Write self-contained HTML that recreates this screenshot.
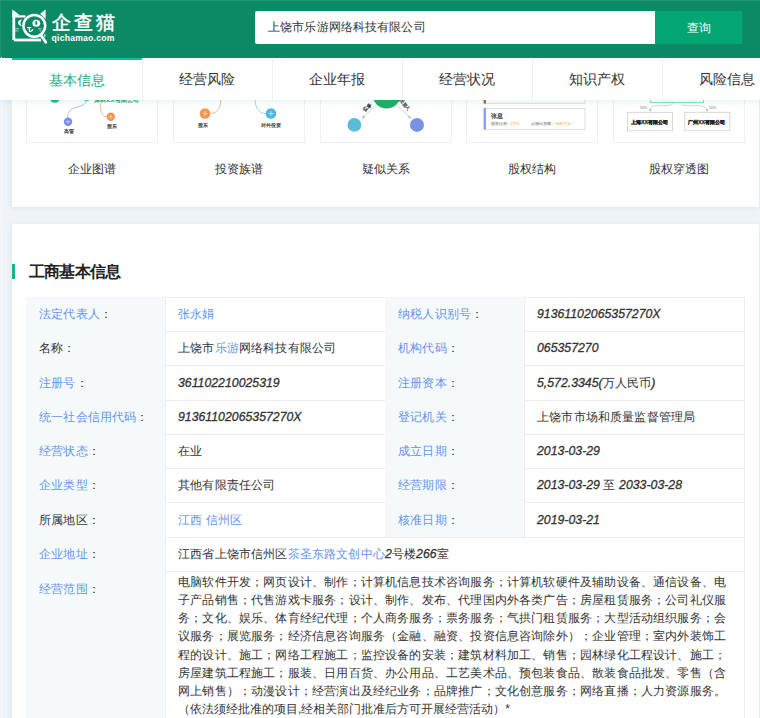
<!DOCTYPE html>
<html><head><meta charset="utf-8">
<style>
*{margin:0;padding:0;box-sizing:border-box}
html,body{width:760px;height:718px;overflow:hidden}
body{background:#eff3f7;font-family:"Liberation Sans",sans-serif;color:#333;position:relative}
.abs{position:absolute}
#hdr{position:absolute;left:0;top:0;width:760px;height:57.5px;background:#0c8a66}
#brand{position:absolute;left:51.5px;top:10.5px;color:#fff;font-size:19px;font-weight:normal;-webkit-text-stroke:0.55px #fff;line-height:24px;letter-spacing:3px}
#dom{position:absolute;left:51.5px;top:32.5px;color:#fff;font-size:8.6px;font-weight:bold;line-height:10px;letter-spacing:0.25px}
#sbox{position:absolute;left:255px;top:11px;width:402px;height:33px;background:#fff;border-radius:2px 0 0 2px}
#stext{position:absolute;left:268px;top:17px;font-size:12px;letter-spacing:0.13px;line-height:20px;color:#333}
#sbtn{position:absolute;left:655px;top:11px;width:87px;height:33px;background:#01a673;color:#fff;font-size:12px;line-height:35px;text-align:center}
#nav{position:absolute;left:0;top:57.5px;width:760px;height:42px;background:#fff;box-shadow:0 2px 6px rgba(20,170,130,0.12);z-index:5}
.tab{position:absolute;top:0;width:130px;height:42px;line-height:42px;text-align:center;font-size:14px;color:#333}
.tab.act{color:#14ae85;border-top:2px solid #10c292;line-height:40px}
.tdiv{position:absolute;top:0;width:1px;height:42px;background:#f0f0f0}
.card{position:absolute;background:#fff;box-shadow:0 1px 5px rgba(0,160,125,0.12)}
.tbox{position:absolute;top:60px;width:132px;height:83px;border:1px solid #edf1f1}
.tlab{position:absolute;top:159px;width:132px;text-align:center;font-size:12.1px;line-height:20px;color:#333}
#ttl{position:absolute;left:28.5px;top:261.5px;font-size:16px;letter-spacing:-0.65px;font-weight:bold;line-height:20px;color:#222}
#tbar{position:absolute;left:12px;top:264px;width:3px;height:15px;background:#17b78e}
.lab{position:absolute;background:#f5f9fa}
.hl{position:absolute;height:1px;background:#ebeeee}
.vl{position:absolute;width:1px;background:#ebeeee}
.t{position:absolute;font-size:12px;letter-spacing:0.17px;line-height:20px;white-space:nowrap;color:#333}
.bl{color:#6495ed;font-weight:normal}
i.n{font-style:italic;-webkit-text-stroke:0.3px #333;font-size:12.3px;letter-spacing:0}
.scope{position:absolute;font-size:12px;line-height:18.12px;text-align:justify;color:#333}
</style></head><body>
<div class="card" style="left:12px;top:70px;width:747px;height:136.7px"></div>
<div class="card" style="left:12px;top:224px;width:747px;height:520px"></div>
<div class="tbox" style="left:26.4px"></div>
<div class="tlab" style="left:26.4px">企业图谱</div>
<div class="tbox" style="left:173.0px"></div>
<div class="tlab" style="left:173.0px">投资族谱</div>
<div class="tbox" style="left:319.6px"></div>
<div class="tlab" style="left:319.6px">疑似关系</div>
<div class="tbox" style="left:466.2px"></div>
<div class="tlab" style="left:466.2px">股权结构</div>
<div class="tbox" style="left:612.8px"></div>
<div class="tlab" style="left:612.8px">股权穿透图</div>
<svg class="abs" style="left:0;top:0" width="760" height="150" viewBox="0 0 760 150" font-family="Liberation Sans, sans-serif">
<!-- thumb 1 -->
<circle cx="54.8" cy="97.5" r="5.2" fill="#1fb88c"/>
<circle cx="86.6" cy="96" r="4.9" fill="#1aa86a"/>
<text x="93.7" y="102" font-size="6.2" font-weight="bold" fill="#17a060" letter-spacing="0.2">深圳XX有限公司</text>
<path d="M86.4 100.5 C 85.5 108, 72 106, 69.5 111 S 68 116, 68 118" fill="none" stroke="#a9b8f5" stroke-width="0.9"/>
<circle cx="68" cy="121.8" r="4.2" fill="#7b8ef0"/>
<path d="M66 121.8h4M68 119.8v4" stroke="#c9d1fa" stroke-width="0.8"/>
<text x="68.6" y="133.4" font-size="5" font-weight="bold" fill="#333" text-anchor="middle">高管</text>
<path d="M100.3 103 C 100.3 110, 101 116.8, 107 116.8" fill="none" stroke="#f0b483" stroke-width="0.9"/>
<circle cx="110.8" cy="116.8" r="4.2" fill="#f39450"/>
<path d="M108.8 116.8h4M110.8 114.8v4" stroke="#fbd7bc" stroke-width="0.8"/>
<text x="111.9" y="128.3" font-size="5" font-weight="bold" fill="#333" text-anchor="middle">股东</text>
<!-- thumb 2 -->
<path d="M210.4 113.4 C 217 113.4, 221 108, 220.9 99" fill="none" stroke="#f0b483" stroke-width="0.9"/>
<circle cx="205" cy="113.5" r="5.3" fill="#f39450"/>
<path d="M202.5 113.5h5M205 111v5" stroke="#fbd7bc" stroke-width="0.9"/>
<text x="202.5" y="126.6" font-size="5" font-weight="bold" fill="#333" text-anchor="middle">股东</text>
<path d="M255.1 99 C 255.1 108, 259 113.4, 265.7 113.5" fill="none" stroke="#8fd3ef" stroke-width="0.9"/>
<circle cx="271" cy="113.5" r="5.3" fill="#4eb8de"/>
<path d="M268.5 113.5h5M271 111v5" stroke="#bfe5f3" stroke-width="0.9"/>
<text x="270.8" y="126.6" font-size="5" font-weight="bold" fill="#333" text-anchor="middle">对外投资</text>
<!-- thumb 3 -->
<circle cx="386.6" cy="94.5" r="14.6" fill="#fff"/>
<circle cx="386.6" cy="94.5" r="14" fill="#22ad66"/>
<path d="M374.4 106.4 L362.5 118" stroke="#c4c4c4" stroke-width="0.8"/>
<path d="M361.8 118.8 l1.2 -3.6 l2.3 2.3z" fill="#bbb"/>
<path d="M398.6 106.4 L410.5 118" stroke="#c4c4c4" stroke-width="0.8"/>
<path d="M411.2 118.8 l-1.2 -3.6 l-2.3 2.3z" fill="#bbb"/>
<text transform="translate(368.5 108.5) rotate(-52)" font-size="5" font-weight="bold" fill="#333" text-anchor="middle">监事</text>
<text transform="translate(403.5 105.5) rotate(52)" font-size="5" font-weight="bold" fill="#333" text-anchor="middle">投资人</text>
<circle cx="354.4" cy="124.9" r="6.9" fill="#5bbcd8"/>
<circle cx="417" cy="124.9" r="7" fill="#7b92e4"/>
<!-- thumb 4 -->
<rect x="484" y="80" width="101" height="23.3" fill="#fff" stroke="#d8d8d8" stroke-width="0.8"/>
<rect x="483.7" y="80" width="2.3" height="23.6" fill="#b4584a"/>
<rect x="484" y="108.4" width="101" height="21" fill="#fff" stroke="#d8d8d8" stroke-width="0.8"/>
<rect x="483.7" y="108" width="2.3" height="21.6" fill="#8c9cf5"/>
<text x="490.5" y="117.8" font-size="6.2" font-weight="bold" fill="#333">张息</text>
<text x="490.5" y="124.8" font-size="4.4" fill="#666">股权比例：<tspan fill="#f5a623">27%</tspan></text>
<text x="531.2" y="124.8" font-size="4.4" fill="#666">认缴出资额：<tspan fill="#f5a623">568万元</tspan></text>
<!-- thumb 5 -->
<rect x="650.6" y="80" width="53" height="22.6" fill="none" stroke="#7fd6b4" stroke-width="0.9"/>
<path d="M673 103.5 C 671 107, 660 105, 654 106 C 651 106.5, 650.3 108, 650.3 110" fill="none" stroke="#c8c8c8" stroke-width="0.7"/>
<path d="M681 103.5 C 683 107, 694 105, 700 106 C 706 106.5, 707 108, 707 110" fill="none" stroke="#c8c8c8" stroke-width="0.7"/>
<path d="M648.8 109.5 h3 l-1.5 2z M705.5 109.5 h3 l-1.5 2z" fill="#aaa"/>
<text x="643.5" y="109" font-size="3.5" fill="#777" text-anchor="middle">50%</text>
<text x="712.5" y="109" font-size="3.5" fill="#777" text-anchor="middle">50%</text>
<rect x="627.4" y="112.3" width="45" height="18.5" fill="#fff" stroke="#cfcfcf" stroke-width="0.8"/>
<rect x="684.8" y="112.3" width="45" height="18.5" fill="#fff" stroke="#cfcfcf" stroke-width="0.8"/>
<text x="649.5" y="124" font-size="5.4" font-weight="bold" fill="#222" stroke="#222" stroke-width="0.25" text-anchor="middle">上海XX有限公司</text>
<text x="706.5" y="124" font-size="5.4" font-weight="bold" fill="#222" stroke="#222" stroke-width="0.25" text-anchor="middle">广州XX有限公司</text>
</svg>

<div id="hdr"></div>
<div style="position:absolute;left:0;top:0;width:760px;height:1px;background:rgba(255,255,255,0.08);z-index:3"></div>
<div style="position:absolute;left:0;top:0;width:1px;height:57px;background:rgba(255,255,255,0.07);z-index:3"></div>
<div style="position:absolute;left:1px;top:57px;width:1px;height:700px;background:#f6f9fc"></div>
<svg class="abs" style="left:0;top:0;z-index:2" width="60" height="57" viewBox="0 0 60 57">
<g fill="none" stroke="#fff">
<path d="M13.8 40 V11.5" stroke-width="2.8"/>
<path d="M13.8 40 H41" stroke-width="2.8"/>
<path d="M14 16.4 H25.5" stroke-width="2.2"/>
<circle cx="34.3" cy="25.8" r="10.9" stroke-width="2.5"/>
<path d="M41 35.2 L45.8 42.3" stroke-width="2.8" stroke-linecap="round"/>
<path d="M15 28.8h4.2M15 30.9h3.4M38.2 28.8h3.4M39.6 30.9h1.8" stroke-width="0.8" stroke="#cfe9df"/>
<path d="M44.8 34 v3" stroke-width="1"/>
</g>
<path d="M12.4 9.5 L12.4 17 L19.5 15 Z" fill="#fff"/>
<path d="M40.2 13.8 L45.6 9.4 L45.6 19 Z" fill="#fff"/>
<path d="M22.4 19.3 C 16.6 19.8, 16.6 25.8, 22.4 26.2 C 19.9 24.6, 19.9 20.9, 22.4 19.3 Z" fill="#fff"/>
<ellipse cx="36.3" cy="23.2" rx="3.9" ry="3.5" fill="#fff"/>
<ellipse cx="36.3" cy="23" rx="1.1" ry="1.9" fill="#0c8a66"/>
<path d="M27 27.6 h4.2 M29.4 27.6 v3.2 c0.6 0.9 2.6 0.6 3.4 -1.6" fill="none" stroke="#fff" stroke-width="1.2"/>
</svg>

<div id="brand">企查猫</div>
<div id="dom">qichamao.com</div>
<div id="sbox"></div>
<div id="stext">上饶市乐游网络科技有限公司</div>
<div id="sbtn">查询</div>
<div id="nav">
<div class="tab act" style="left:12px">基本信息</div>
<div class="tab" style="left:142px">经营风险</div>
<div class="tdiv" style="left:142px"></div>
<div class="tab" style="left:272px">企业年报</div>
<div class="tdiv" style="left:272px"></div>
<div class="tab" style="left:402px">经营状况</div>
<div class="tdiv" style="left:402px"></div>
<div class="tab" style="left:532px">知识产权</div>
<div class="tdiv" style="left:532px"></div>
<div class="tab" style="left:662px">风险信息</div>
<div class="tdiv" style="left:662px"></div>
</div>
<div id="tbar"></div>
<div id="ttl">工商基本信息</div>
<div class="hl" style="left:26px;top:297px;width:719px"></div>
<div class="hl" style="left:26px;top:331px;width:719px"></div>
<div class="hl" style="left:26px;top:365px;width:719px"></div>
<div class="hl" style="left:26px;top:400px;width:719px"></div>
<div class="hl" style="left:26px;top:434px;width:719px"></div>
<div class="hl" style="left:26px;top:468px;width:719px"></div>
<div class="hl" style="left:26px;top:502px;width:719px"></div>
<div class="hl" style="left:26px;top:537px;width:719px"></div>
<div class="hl" style="left:26px;top:571px;width:719px"></div>
<div class="vl" style="left:26px;top:297px;height:421px"></div>
<div class="vl" style="left:165px;top:297px;height:421px"></div>
<div class="vl" style="left:385px;top:297px;height:240px"></div>
<div class="vl" style="left:524px;top:297px;height:240px"></div>
<div class="vl" style="left:744px;top:297px;height:421px"></div>
<div class="lab" style="left:26px;top:297px;width:139px;height:34px"></div>
<div class="lab" style="left:385px;top:297px;width:139px;height:34px"></div>
<div class="t" style="left:39px;top:304.0px"><b class="bl">法定代表人</b>：</div>
<div class="t" style="left:178px;top:304.0px"><span class="bl">张永娟</span></div>
<div class="t" style="left:398px;top:304.0px"><b class="bl">纳税人识别号</b>：</div>
<div class="t" style="left:537px;top:304.0px"><i class="n">91361102065357270X</i></div>
<div class="lab" style="left:26px;top:331px;width:139px;height:34px"></div>
<div class="lab" style="left:385px;top:331px;width:139px;height:34px"></div>
<div class="t" style="left:39px;top:338.0px">名称：</div>
<div class="t" style="left:178px;top:338.0px">上饶市<span class="bl">乐游</span>网络科技有限公司</div>
<div class="t" style="left:398px;top:338.0px"><b class="bl">机构代码</b>：</div>
<div class="t" style="left:537px;top:338.0px"><i class="n">065357270</i></div>
<div class="lab" style="left:26px;top:365px;width:139px;height:35px"></div>
<div class="lab" style="left:385px;top:365px;width:139px;height:35px"></div>
<div class="t" style="left:39px;top:372.5px"><b class="bl">注册号</b>：</div>
<div class="t" style="left:178px;top:372.5px"><i class="n">361102210025319</i></div>
<div class="t" style="left:398px;top:372.5px"><b class="bl">注册资本</b>：</div>
<div class="t" style="left:537px;top:372.5px"><i class="n">5,572.3345(</i>万人民币<i class="n">)</i></div>
<div class="lab" style="left:26px;top:400px;width:139px;height:34px"></div>
<div class="lab" style="left:385px;top:400px;width:139px;height:34px"></div>
<div class="t" style="left:39px;top:407.0px"><b class="bl">统一社会信用代码</b>：</div>
<div class="t" style="left:178px;top:407.0px"><i class="n">91361102065357270X</i></div>
<div class="t" style="left:398px;top:407.0px"><b class="bl">登记机关</b>：</div>
<div class="t" style="left:537px;top:407.0px">上饶市市场和质量监督管理局</div>
<div class="lab" style="left:26px;top:434px;width:139px;height:34px"></div>
<div class="lab" style="left:385px;top:434px;width:139px;height:34px"></div>
<div class="t" style="left:39px;top:441.0px"><b class="bl">经营状态</b>：</div>
<div class="t" style="left:178px;top:441.0px">在业</div>
<div class="t" style="left:398px;top:441.0px"><b class="bl">成立日期</b>：</div>
<div class="t" style="left:537px;top:441.0px"><i class="n">2013-03-29</i></div>
<div class="lab" style="left:26px;top:468px;width:139px;height:34px"></div>
<div class="lab" style="left:385px;top:468px;width:139px;height:34px"></div>
<div class="t" style="left:39px;top:475.0px"><b class="bl">企业类型</b>：</div>
<div class="t" style="left:178px;top:475.0px">其他有限责任公司</div>
<div class="t" style="left:398px;top:475.0px"><b class="bl">经营期限</b>：</div>
<div class="t" style="left:537px;top:475.0px"><i class="n">2013-03-29</i> 至 <i class="n">2033-03-28</i></div>
<div class="lab" style="left:26px;top:502px;width:139px;height:35px"></div>
<div class="lab" style="left:385px;top:502px;width:139px;height:35px"></div>
<div class="t" style="left:39px;top:509.5px">所属地区：</div>
<div class="t" style="left:178px;top:509.5px"><span class="bl">江西 信州区</span></div>
<div class="t" style="left:398px;top:509.5px"><b class="bl">核准日期</b>：</div>
<div class="t" style="left:537px;top:509.5px"><i class="n">2019-03-21</i></div>
<div class="lab" style="left:26px;top:537px;width:139px;height:34px"></div>
<div class="t" style="left:39px;top:544.0px"><b class="bl">企业地址</b>：</div>
<div class="t" style="left:178px;top:544.0px">江西省上饶市信州区<span class="bl">茶圣东路文创中心</span><i class="n">2</i>号楼<i class="n">266</i>室</div>
<div class="lab" style="left:26px;top:571px;width:139px;height:167px"></div>
<div class="t" style="left:39px;top:578.7px"><b class="bl">经营范围</b>：</div>
<div class="scope" style="left:178px;top:573px;width:548px">电脑软件开发；网页设计、制作；计算机信息技术咨询服务；计算机软硬件及辅助设备、通信设备、电子产品销售；代售游戏卡服务；设计、制作、发布、代理国内外各类广告；房屋租赁服务；公司礼仪服务；文化、娱乐、体育经纪代理；个人商务服务；票务服务；气拱门租赁服务；大型活动组织服务；会议服务；展览服务；经济信息咨询服务（金融、融资、投资信息咨询除外）；企业管理；室内外装饰工程的设计、施工；网络工程施工；监控设备的安装；建筑材料加工、销售；园林绿化工程设计、施工；房屋建筑工程施工；服装、日用百货、办公用品、工艺美术品、预包装食品、散装食品批发、零售（含网上销售）；动漫设计；经营演出及经纪业务；品牌推广；文化创意服务；网络直播；人力资源服务。（依法须经批准的项目,经相关部门批准后方可开展经营活动）*</div>
</body></html>
